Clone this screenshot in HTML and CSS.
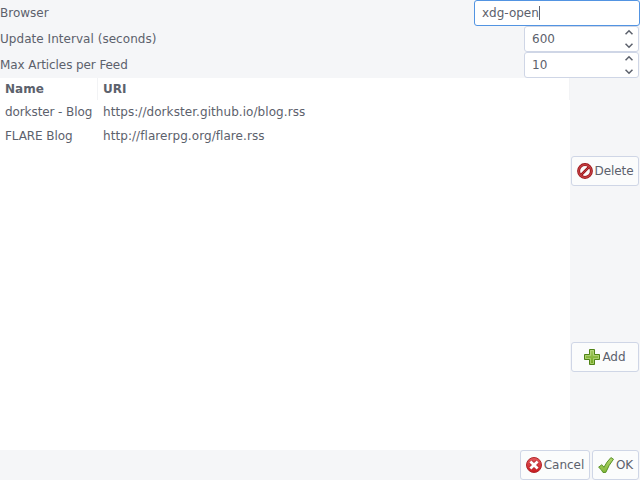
FILE: index.html
```html
<!DOCTYPE html>
<html lang="en">
<head>
<meta charset="utf-8">
<title>Feeds</title>
<link rel="stylesheet" href="styles.css">
</head>
<body>
<div class="window">
  <div class="row"><span>Browser</span><div class="entry focused">xdg-open<i class="caret"></i></div></div>
  <div class="row"><span class="wide">Update Interval (seconds)</span><div class="entry spin">600
    <svg class="arrows" width="8" height="20" viewBox="0 0 8 20"><path d="M.5 5.3 4 1.8 7.5 5.3M.5 14.7 4 18.2 7.5 14.7"/></svg></div></div>
  <div class="row"><span class="tight">Max Articles per Feed</span><div class="entry spin">10
    <svg class="arrows" width="8" height="20" viewBox="0 0 8 20"><path d="M.5 5.3 4 1.8 7.5 5.3M.5 14.7 4 18.2 7.5 14.7"/></svg></div></div>
  <div class="main">
    <div class="list">
      <div class="item head"><span class="name">Name</span><span>URI</span></div>
      <div class="item"><span class="name tight">dorkster - Blog</span><span class="uri">https://dorkster.github.io/blog.rss</span></div>
      <div class="item"><span class="name tight">FLARE Blog</span><span class="uri">http://flarerpg.org/flare.rss</span></div>
    </div>
    <div class="side">
      <div class="cell"><div class="button">
        <svg width="16" height="16" viewBox="0 0 16 16"><g fill="none"><circle cx="8" cy="8" r="6.4" stroke="#9c1519" stroke-width="3"/><path d="M3.7 12.3 12.3 3.7" stroke="#9c1519" stroke-width="2.6"/><circle cx="8" cy="8" r="6.4" stroke="#c54346" stroke-width="1.2"/><path d="M3.7 12.3 12.3 3.7" stroke="#c54346" stroke-width=".9"/></g></svg>
        <span class="tight">Delete</span></div></div>
      <div class="cell"><div class="button">
        <svg width="16" height="16" viewBox="0 0 16 16"><defs><linearGradient id="plus" x2="0" y2="1"><stop stop-color="#a5cb64"/><stop offset="1" stop-color="#6fa61c"/></linearGradient></defs><path d="M5.5.5h5v5h5v5h-5v5h-5v-5h-5v-5h5z" fill="url(#plus)" stroke="#4f8316"/><path d="M6.5 1.5h3v5h5v3h-5v5h-3v-5h-5v-3h5z" fill="none" stroke="#bfdc8c" stroke-opacity=".65"/></svg>
        <span>Add</span></div></div>
    </div>
  </div>
  <div class="actions">
    <div class="button cancel">
      <svg width="16" height="16" viewBox="0 0 16 16"><defs><linearGradient id="red" x2="0" y2="1"><stop stop-color="#e55b5e"/><stop offset="1" stop-color="#c9191e"/></linearGradient></defs><circle cx="8" cy="8" r="7.5" fill="url(#red)" stroke="#b0272b"/><path d="m4.5 4.5 7 7m0-7-7 7" fill="none" stroke="#b0272b" stroke-width="4"/><path d="m4.4 4.4 7.2 7.2m0-7.2-7.2 7.2" fill="none" stroke="#fff" stroke-width="2.8"/></svg>
      <span>Cancel</span></div>
    <div class="button ok">
      <svg width="16" height="16" viewBox="0 0 16 16"><defs><linearGradient id="check" x2="0" y2="1"><stop stop-color="#b1d56e"/><stop offset="1" stop-color="#83b83a"/></linearGradient></defs><path d="M12.9.6 15.5 2.2Q10.8 7.9 7.8 15.4L5 15.5Q3.4 12.2.6 10.2L3.8 7.7Q5.2 8.8 5.9 10.3 8.6 4.8 12.9.6Z" fill="url(#check)" stroke="#4f8a1c" stroke-width=".9" stroke-linejoin="round"/></svg>
      <span class="tight">OK</span></div>
  </div>
</div>
</body>
</html>
```
FILE: styles.css
```css
* { box-sizing: border-box; }
body { margin: 0; background: #f5f6f8; color: #5c616c; font: 12px/14px "DejaVu Sans", sans-serif; }
.window { width: 640px; height: 480px; display: flex; flex-direction: column; overflow: hidden; }
.row { height: 26px; display: flex; justify-content: space-between; align-items: center; }
.wide { letter-spacing: .04px; }
.tight { letter-spacing: -.09px; }
.uri { letter-spacing: .065px; }
.entry { position: relative; width: 166px; height: 26px; display: flex; align-items: center; padding-left: 7px; border: 1px solid #cfd6e6; border-radius: 3px; background: #fff; }
.focused { border-color: #5294e2; }
.spin { width: 115px; margin-right: 1px; }
.caret { width: 1px; height: 14px; background: #5c616c; }
.arrows { margin-left: auto; margin-right: 5px; fill: none; stroke: #5c616c; stroke-width: 1.6; }
.main { flex: 1; display: flex; }
.list { width: 570px; background: #fff; }
.item { height: 24px; display: flex; align-items: center; }
.item span { padding-left: 5px; }
.item .name { width: 98px; }
.head { height: 22px; font-weight: bold; border-right: 1px solid #f2f3f5; }
.head span { height: 22px; line-height: 22px; }
.head .name { border-right: 1px solid #f2f3f5; }
.side { flex: 1; display: flex; flex-direction: column; padding: 0 1px; }
.cell { flex: 1; display: flex; align-items: center; }
.button { width: 68px; height: 30px; display: flex; align-items: center; justify-content: center; gap: 2px; border: 1px solid #cfd6e6; border-radius: 3px; background: #fbfcfc; }
.button svg { flex: none; }
.actions { height: 30px; display: flex; justify-content: flex-end; gap: 2px; padding-right: 1px; }
.cancel { width: 70px; }
.ok { width: 47px; }
```
